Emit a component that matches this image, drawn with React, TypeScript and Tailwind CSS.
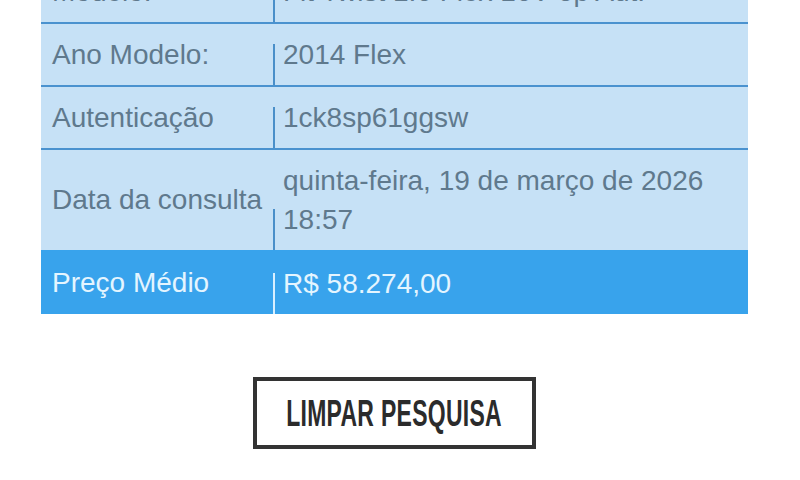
type RowProps = {
  label: string;
  value: React.ReactNode;
  highlight?: boolean;
  first?: boolean;
};

function Row({ label, value, highlight, first }: RowProps) {
  return (
    <div
      className={`flex ${first ? "" : "border-t-2"} ${
        highlight
          ? "border-[#38a3ec] bg-[#38a3ec] text-[#e4f5ff]"
          : "border-[#4a92cf] bg-[#c6e1f6] text-[#5f798d]"
      }`}
    >
      <div className="flex w-[232px] shrink-0 items-center pl-[11px]">{label}</div>
      <div className="flex w-[2px] shrink-0 flex-col justify-end">
        <div className={`h-[41px] ${highlight ? "bg-[#d8efff]" : "bg-[#4a8fc9]"}`} />
      </div>
      <div
        className={`flex flex-1 items-center py-[11px] pl-[8px] leading-[39px] ${
          highlight ? "min-h-[62px] pt-[12px]" : "min-h-[61px]"
        }`}
      >
        <div>{value}</div>
      </div>
    </div>
  );
}

export default function App() {
  return (
    <main className="h-[480px] overflow-hidden bg-white font-['Liberation_Sans',Arial,sans-serif] text-[28px]">
      <div className="-mt-[39px] ml-[41px] w-[707px]">
        <Row first label="Modelo:" value="Fit Twist 1.6 Flex 16V 5p Aut." />
        <Row label="Ano Modelo:" value="2014 Flex" />
        <Row label="Autenticação" value="1ck8sp61ggsw" />
        <Row
          label="Data da consulta"
          value={
            <>
              quinta-feira, 19 de março de 2026
              <br />
              18:57
            </>
          }
        />
        <Row highlight label="Preço Médio" value="R$ 58.274,00" />
      </div>

      <div className="ml-[41px] mt-[63px] flex w-[707px] justify-center">
        <button className="flex h-[72px] w-[283px] items-center justify-center border-4 border-[#333333] bg-white">
          <span className="inline-block scale-x-[0.62] whitespace-nowrap text-[37px] font-bold leading-none tracking-[0.5px] text-[#2b2b2b]">
            LIMPAR PESQUISA
          </span>
        </button>
      </div>
    </main>
  );
}
